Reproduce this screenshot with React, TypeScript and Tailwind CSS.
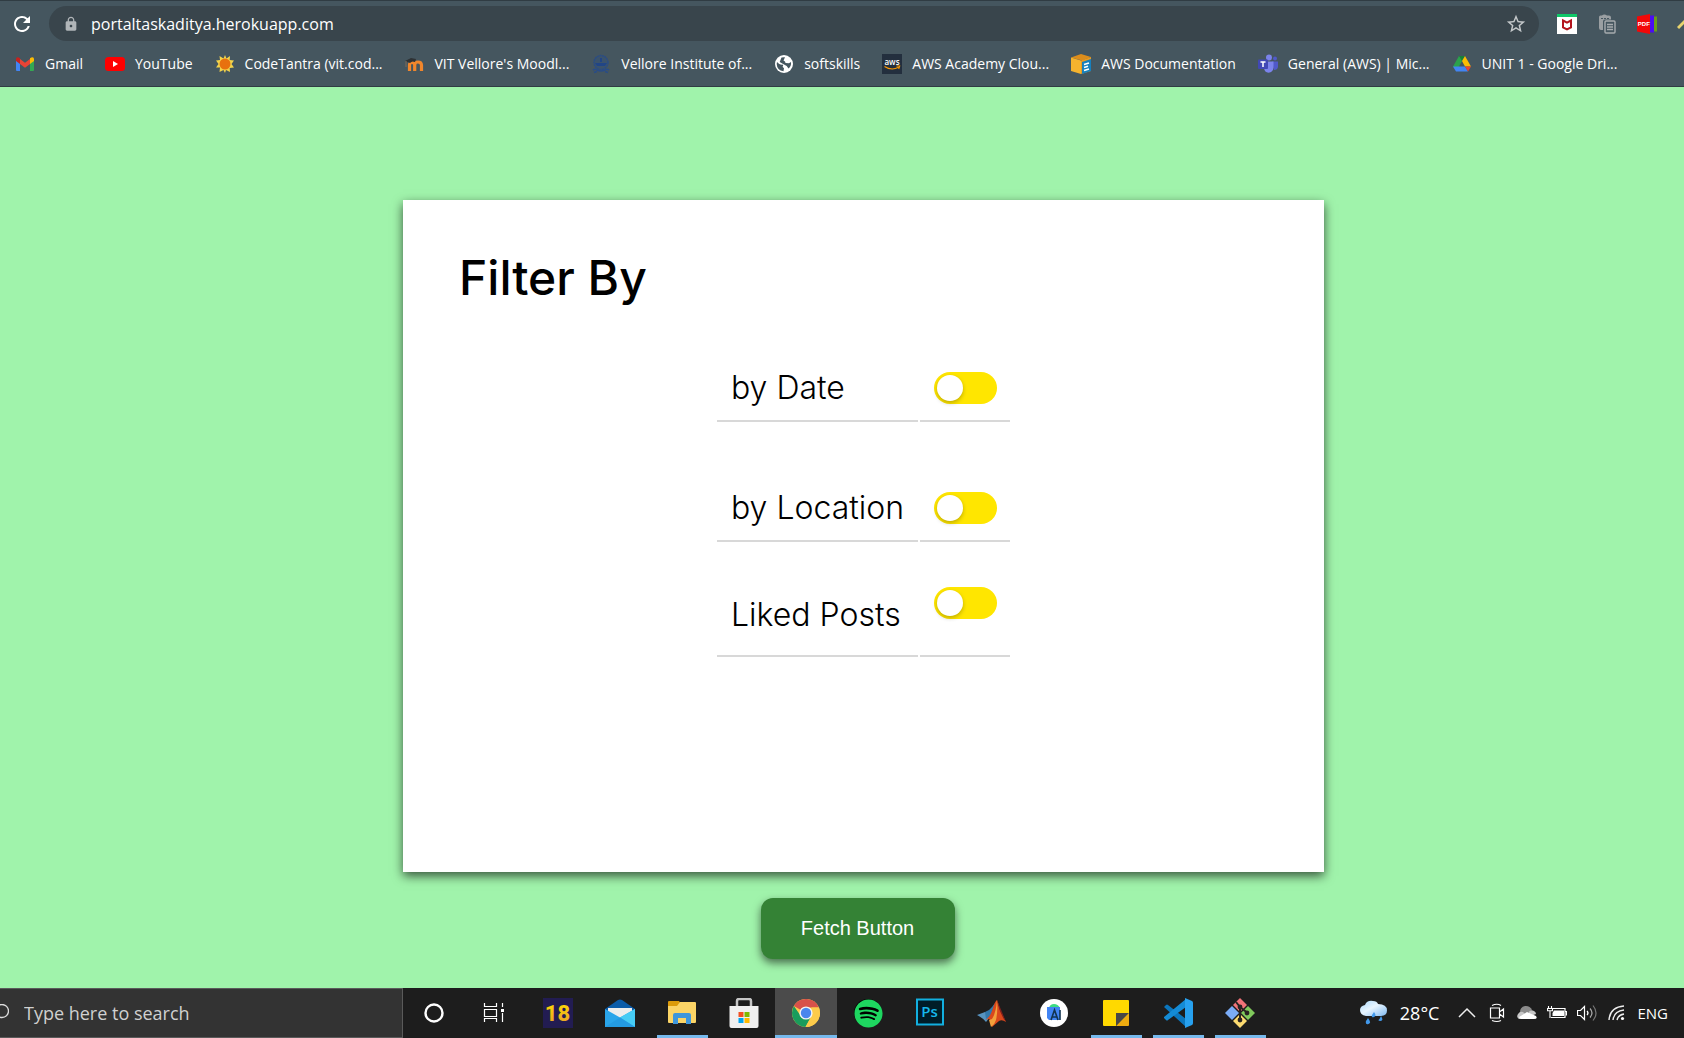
import type { ReactNode } from "react";
import { FaSpotify } from "react-icons/fa";
import { MdLock, MdRefresh, MdStarBorder } from "react-icons/md";

const Svg = ({ box = 20, className, children }: { box?: number; className: string; children: ReactNode }) => (
  <svg viewBox={`0 0 ${box} ${box}`} className={`shrink-0 ${className}`} aria-hidden="true">
    {children}
  </svg>
);

const S = "size-5";
const L = "size-[30px]";

const GmailIcon = () => (
  <Svg className={S}>
    <path d="M1 6v10q0 1 1 1h3V9z" fill="#4285f4" />
    <path d="M19 6v10q0 1-1 1h-3V9z" fill="#34a853" />
    <path d="M15 5.5V10l4-3V5q0-1.500-1.500-1.800-1-.1-2.500 1z" fill="#fbbc04" />
    <path d="M5 5.500V10L1 7V5q0-1.500 1.500-1.800 1-.1 2.500 1z" fill="#c5221f" />
    <path d="M5 5v5l5 3.800L15 10V5l-5 3.800z" fill="#ea4335" />
  </Svg>
);
const YouTubeIcon = () => (
  <Svg className={S}>
    <rect y="3" width="20" height="14" rx="3.500" fill="#f00" />
    <path d="M8 7v6l5-3z" fill="#fff" />
  </Svg>
);
const SunIcon = () => (
  <Svg className={S}>
    <path d="M10 1l1.500 3.500L15 2l-.3 4L19 6.500 16.500 10l2.500 3.500-4.300.5.300 4-4-2L10 19l-1.500-3-4 2 .5-4.500L1 13.500 3.500 10 1 6.500 5 6l-.5-4L8.500 4.500z" fill="#f3d34a" />
    <circle cx="10" cy="10" r="5.500" fill="#e8710f" />
  </Svg>
);
const MoodleIcon = () => (
  <Svg className={S}>
    <path d="M5.500 17v-6q0-2.500 2.500-2.500T10.700 11v6m0-6q0-3 3.300-3t3.500 3v6" fill="none" stroke="#f0862c" strokeWidth="3.200" />
    <path d="M1 7l6-3 5 1-1 3q-3-1.500-5 1z" fill="#2e3235" />
    <path d="M2 7v6" stroke="#806a58" strokeWidth="1" />
  </Svg>
);
const CrestIcon = () => (
  <Svg className={S}>
    <circle cx="10" cy="8.500" r="7" fill="#3b536c" stroke="#294c87" strokeWidth="1.400" strokeDasharray="2 .6" />
    <path d="M4 9h12l-2 3H6zM9 4h2v4H9z" fill="#214586" />
    <path d="M2 16q2-1.500 4 0 4 2 8 0 2-1.500 4 0M3 18.500l3-1m8 0l3 1" fill="none" stroke="#294c87" strokeWidth="1.600" />
  </Svg>
);
const GlobeIcon = () => (
  <Svg className={S}>
    <circle cx="10" cy="10" r="9" fill="#fff" />
    <path d="M3 8q2.500 3 5 2.600 2 .4.500 2.200l1.500 1.500-.500 3Q3 16.500 2.700 10zM7.500 3.500q2-.500 3.500-.3L9.500 6.500q2 .5 2 2.500l3.500.200 2-1.200q.5 4-2.500 6.600l-1.800-2.600-4-2.200-3-1.800z" fill="#45565f" />
  </Svg>
);
const AwsIcon = () => (
  <Svg className={S}>
    <rect width="20" height="20" fill="#232f3e" />
    <text x="10" y="10.500" textAnchor="middle" fontSize="8" fontWeight="600" fontFamily="Open Sans, sans-serif" fill="#fff">aws</text>
    <path d="M2.500 12.500q7 4.500 14 .8M14.500 12h3.200l-1 3" fill="none" stroke="#f90" strokeWidth="1.100" />
  </Svg>
);
const AwsDocIcon = () => (
  <Svg className={S}>
    <path d="M10 0l10 3-9 3.500L0 3.500z" fill="#dc8d1c" />
    <path d="M0 3.500l10 3V20L0 17z" fill="#f5b32e" />
    <path d="M10 6.500L20 3v14l-10 3z" fill="#e99b22" />
    <path d="M11 8l9-3v12l-9 3z" fill="#1680bd" />
    <path d="M13 10.500l5-1.500M13 13.500l4-1.200M13 16.500l5-1.500" stroke="#fff" strokeWidth="1.700" />
  </Svg>
);
const TeamsIcon = () => (
  <Svg className={S}>
    <circle cx="11" cy="3.500" r="3" fill="#7b83eb" />
    <circle cx="17" cy="4.500" r="2" fill="#5059c9" />
    <path d="M14 7.500h6v5.500q-.5 3-4 3z" fill="#5059c9" />
    <path d="M6 7.500h9.500v6q-.5 5-5 5.200Q6.500 18.500 6 14z" fill="#7b83eb" />
    <rect y="5.500" width="10" height="9.500" rx="1" fill="#4148b5" />
    <path d="M2.500 8h5M5 8v5" stroke="#fff" strokeWidth="1.500" />
  </Svg>
);
const DriveIcon = () => (
  <Svg className={S}>
    <path d="M7 2h3v5L4.500 17 1 12.500z" fill="#2ba24c" />
    <path d="M7 2h6l-3 5z" fill="#188038" />
    <path d="M13 2l6 10.500h-6L10 7z" fill="#fbbc04" />
    <path d="M7 12.500h6l3 5H4L1 12.500z" fill="#4285f4" />
    <path d="M13 12.500h6l-3 5z" fill="#ea4335" />
  </Svg>
);

const McAfeeIcon = () => (
  <Svg className={S}>
    <rect width="20" height="20" fill="#fff" />
    <rect width="20" height="3" fill="#0fc768" />
    <path d="M6 6.500l4 2.200 4-2.200v7L10 15.500l-4-2z" fill="none" stroke="#b3141d" strokeWidth="2" />
  </Svg>
);
const ClipboardIcon = () => (
  <Svg className={S}>
    <path d="M2 3q0-1.500 1.500-1.500H5q2-2 5 0h2q2 0 2 2v2H8q-2 0-2 2V16H4q-2 0-2-2z" fill="#9a9fa2" />
    <path d="M4 4.500h8" stroke="#45565f" strokeDasharray="2 1" />
    <rect x="8" y="7" width="10" height="12" rx="1" fill="#45565f" stroke="#a7acaf" strokeWidth="1.400" />
    <path d="M10 10.500h6M10 13h6M10 15.500h6" stroke="#a7acaf" strokeWidth="1.300" />
  </Svg>
);
const PdfIcon = () => (
  <Svg className={S}>
    <path d="M16 2.500h4v15h-4z" fill="#6b9a19" />
    <path d="M13 1.500h4v17h-4z" fill="#4b0df2" />
    <path d="M0 2.500L13 0v20L0 17.500z" fill="#f20808" />
    <text x="6.800" y="12.200" textAnchor="middle" fontSize="6" fontWeight="700" fontFamily="Liberation Sans, sans-serif" fill="#fff">PDF</text>
  </Svg>
);

const CortanaIcon = () => (
  <Svg box={30} className={L}><circle cx="15" cy="15" r="8.500" fill="none" stroke="#fff" strokeWidth="2.400" /></Svg>
);
const TaskViewIcon = () => (
  <Svg box={30} className={L}>
    <path d="M3.500 5v3.500h12V5M3.500 24v-3.500h12V24M3.500 11.500h12v7h-12zM21.500 5v4m0 6v9" fill="none" stroke="#fff" strokeWidth="1.200" />
    <rect x="20" y="11" width="3" height="3" fill="#fff" />
  </Svg>
);
const EighteenIcon = () => (
  <Svg box={30} className={L}>
    <defs><linearGradient id="gold" x2="0" y2="1"><stop stopColor="#ffe000" /><stop offset="1" stopColor="#e79a2c" /></linearGradient></defs>
    <rect width="30" height="30" fill="#221c52" />
    <text x="14.500" y="23" textAnchor="middle" fontSize="22" fontWeight="800" fontFamily="Roboto, sans-serif" fill="url(#gold)">18</text>
  </Svg>
);
const MailIcon = () => (
  <Svg box={30} className={L}>
    <path d="M0 11L13 2q2-1 4 0l13 9v8H0z" fill="#0a5ba8" />
    <path d="M3 10h24v7l-12 5L3 17z" fill="#ededed" />
    <path d="M0 11l15 8.500L30 11v18H0z" fill="#2aa5ea" />
    <path d="M30 11v18L15 19.500z" fill="#46ccf5" />
    <path d="M0 29h30L15 19.500z" fill="#249be2" />
  </Svg>
);
const FolderIcon = () => (
  <Svg box={30} className={L}>
    <path d="M1 4q0-1 1-1h10l2 3v5H1z" fill="#dc9b0a" />
    <path d="M1 8h9l3-4h15q1 0 1 1v19q0 1-1 1H2q-1 0-1-1z" fill="#fbd466" />
    <path d="M6 26V17q0-2 2-2h14q2 0 2 2v9h-5v-6h-8v6z" fill="#3e96dc" />
  </Svg>
);
const StoreIcon = () => (
  <Svg box={30} className={L}>
    <path d="M8 9V3q0-2 2-2h10q2 0 2 2v6" fill="none" stroke="#c6c6c6" strokeWidth="2.500" />
    <path d="M.500 8h29v20q0 2-2 2h-25q-2 0-2-2z" fill="#f0f0f0" />
    <path d="M9.500 14h5v5h-5z" fill="#f25022" /><path d="M15.500 14h5v5h-5z" fill="#7fba00" />
    <path d="M9.500 20h5v5h-5z" fill="#00a4ef" /><path d="M15.500 20h5v5h-5z" fill="#ffb900" />
  </Svg>
);
const ChromeIcon = () => (
  <Svg box={30} className={L}>
    <circle cx="15" cy="15" r="14" fill="#fdcb4b" />
    <path d="M15 15L2.900 8A14 14 0 0 1 27.800 9.500H15z" fill="#d8514a" />
    <path d="M2.900 8A14 14 0 0 0 14.500 29L20.500 18 9.800 18z" fill="#1a9c5c" />
    <path d="M27.800 9.500A14 14 0 0 1 14.500 29L20.500 18V9.500z" fill="#fdcb4b" />
    <circle cx="15" cy="15" r="6.600" fill="#f4f4f4" />
    <circle cx="15" cy="15" r="5.200" fill="#4a86ee" />
  </Svg>
);
const SpotifyIcon = () => (
  <span className="grid size-[30px] place-items-center">
    <span className="grid size-7 place-items-center rounded-full bg-black"><FaSpotify className="size-[29px] shrink-0 text-[#1ed760]" /></span>
  </span>
);
const PsIcon = () => (
  <Svg box={30} className={L}>
    <rect x="2" y="1.500" width="26" height="25" fill="#001d28" stroke="#12b0e0" strokeWidth="2" />
    <text x="14.500" y="19" textAnchor="middle" fontSize="15" fontWeight="600" fontFamily="Open Sans, sans-serif" fill="#16b8ec">Ps</text>
  </Svg>
);
const MatlabIcon = () => (
  <Svg box={30} className={L}>
    <path d="M0 17l8-3 5 5-4 5q-3-4-9-7z" fill="#5793c0" />
    <path d="M8 14q4-1 7-5l3-4-4 13-5 3z" fill="#3478ab" />
    <path d="M8 22q5-2 8-12 2-7 4-8 2 5 3 10l6 12q-4-3-7-1l-7 6q0-6-3-8z" fill="#d9481c" />
    <path d="M20 2q-1 13-5 19l-3 1 2 7q4-3 5-7 2-9 1-20z" fill="#f2a13b" />
    <path d="M20 2q5 12 9 22-5-6-8-17z" fill="#83201c" />
  </Svg>
);
const AndroidStudioIcon = () => (
  <Svg box={30} className={L}>
    <circle cx="15" cy="15" r="14" fill="#fff" />
    <path d="M10 10q1-4 5-4t6 4z" fill="#3ddc84" />
    <path d="M8 9h13v13H10l-2-2z" fill="#4285f4" />
    <path d="M12 22l3.500-10L19 22M13.500 19h4M21 12v10" fill="none" stroke="#123450" strokeWidth="1.600" />
  </Svg>
);
const StickyIcon = () => (
  <Svg box={30} className={L}>
    <path d="M2 3q0-1 1-1h24q1 0 1 1v13L15 28H3q-1 0-1-1z" fill="#ffd900" />
    <path d="M28 15v12q0 1-1 1H15z" fill="#eeac10" />
    <path d="M15 15h13L15 28z" fill="#474747" />
  </Svg>
);
const VsCodeIcon = () => (
  <Svg box={30} className={L}>
    <path d="M1 9l2-2q1-1 2 0l18 14v8z" fill="#0b76bd" />
    <path d="M1 20l2 2q1 1 2 0L23 9V1L1 19z" fill="#148bd5" />
    <path d="M22 0l7 3q1 .5 1 2v20q0 1.500-1 2l-7 3z" fill="#27a1ef" />
  </Svg>
);
const GitIcon = () => (
  <Svg box={30} className={L}>
    <path d="M15 0l7 7-7 7-7-7z" fill="#f17378" />
    <path d="M7 8l7 7-7 7-7-7z" fill="#7bacf7" />
    <path d="M23 8l7 7-7 7-7-7z" fill="#80c95c" />
    <path d="M15 16l7 7-7 7-7-7z" fill="#fcda70" />
    <path d="M11 4l4 5v14M15 9l7 5.500" fill="none" stroke="#282322" strokeWidth="2" />
    <circle cx="15" cy="9" r="2.400" fill="#282322" /><circle cx="22" cy="15" r="2.400" fill="#282322" /><circle cx="15" cy="22" r="2.400" fill="#282322" />
  </Svg>
);

const RainIcon = () => (
  <Svg box={28} className="size-7">
    <defs><linearGradient id="cloud" x1="0" y1="0" x2="1" y2="1"><stop stopColor="#a9d8fb" /><stop offset=".45" stopColor="#e8f5ff" /><stop offset="1" stopColor="#7fb9f0" /></linearGradient></defs>
    <path d="M6 17q-6-1-6-6 0-4 5-5 2-5 8-4 4 0 5 3 9 0 9 6.500 0 5-6 5.500z" fill="url(#cloud)" />
    <path d="M14 13q3 4 0 5t-2-2zM21 17q3 5-.500 5t-1-2zM8 19q4 5 .500 6t-2.500-3z" fill="#4299eb" />
  </Svg>
);
const ChevronIcon = () => <Svg className={S}><path d="M2 14l8-8 8 8" fill="none" stroke="#eee" strokeWidth="1.500" /></Svg>;
const CameraIcon = () => (
  <Svg className={S}>
    <path d="M3.500 5h9v10h-9zM12.500 9l4-3v8l-4-3M5 2.500q5-2.500 9 0M5 17.500q5 2 9 0" fill="none" stroke="#fff" strokeWidth="1.200" />
  </Svg>
);
const CloudIcon = () => (
  <Svg className={S}>
    <path d="M3 12q-1-8 5-9 5-.500 7 4l-9 6z" fill="#8b8b8b" />
    <path d="M2 16q-3-2-1-5 2-3 5-2l8 7zM11 10q2-4 6-2 2 1 2 3l-5 2z" fill="#c7c7c7" />
    <path d="M4 16q-2-1-2-2l8-5 9 4q2 3-2 3z" fill="#fff" />
  </Svg>
);
const BatteryIcon = () => (
  <Svg className={S}>
    <path d="M5 5.500h13v9H4M18.500 8.500h1v4" fill="none" stroke="#fff" strokeWidth="1.200" />
    <path d="M7 7.500h10v5.500H5.500V10z" fill="#fff" />
    <path d="M1.500 3v2m3-2v2M.500 5.500h5v2.300H.500zM3 8v7" fill="none" stroke="#fff" strokeWidth="1.100" />
  </Svg>
);
const SpeakerIcon = () => (
  <Svg className={S}>
    <path d="M.500 7.500h3l4-4v13l-4-4h-3z" fill="none" stroke="#fff" strokeWidth="1.200" />
    <path d="M10 8q2 2 0 4" fill="none" stroke="#fff" strokeWidth="1.200" />
    <path d="M13 5.500q4 4.500 0 9" fill="none" stroke="#aaa" strokeWidth="1.200" />
    <path d="M16 2.500q6 7.500 0 15" fill="none" stroke="#777" strokeWidth="1.200" />
  </Svg>
);
const WifiIcon = () => (
  <Svg className={S}>
    <path d="M2 17Q3 4 17 3M6 17Q7 8 17 7M10 17q1-5 7-6" fill="none" stroke="#eee" strokeWidth="1.400" />
    <circle cx="15.500" cy="15.500" r="1.600" fill="#fff" />
  </Svg>
);

const bookmarks = [
  { label: "Gmail", icon: <GmailIcon /> },
  { label: "YouTube", icon: <YouTubeIcon /> },
  { label: "CodeTantra (vit.cod...", icon: <SunIcon /> },
  { label: "VIT Vellore's Moodl...", icon: <MoodleIcon /> },
  { label: "Vellore Institute of...", icon: <CrestIcon /> },
  { label: "softskills", icon: <GlobeIcon /> },
  { label: "AWS Academy Clou...", icon: <AwsIcon /> },
  { label: "AWS Documentation", icon: <AwsDocIcon /> },
  { label: "General (AWS) | Mic...", icon: <TeamsIcon /> },
  { label: "UNIT 1 - Google Dri...", icon: <DriveIcon /> },
];

const filters = [
  { id: "date", label: "by Date", labelCell: "pb-4", toggleCell: "pb-4", row: "h-[118px]" },
  { id: "location", label: "by Location", labelCell: "pb-4", toggleCell: "pb-4", row: "h-[118px]" },
  { id: "liked", label: "Liked Posts", labelCell: "pb-6", toggleCell: "pb-9", row: "h-[113px]" },
];

const apps = [
  { name: "Cortana", icon: <CortanaIcon /> },
  { name: "Task View", icon: <TaskViewIcon /> },
  { name: "Sony 18", icon: <EighteenIcon /> },
  { name: "Mail", icon: <MailIcon /> },
  { name: "File Explorer", icon: <FolderIcon />, state: "open" },
  { name: "Microsoft Store", icon: <StoreIcon /> },
  { name: "Google Chrome", icon: <ChromeIcon />, state: "active" },
  { name: "Spotify", icon: <SpotifyIcon /> },
  { name: "Photoshop", icon: <PsIcon /> },
  { name: "MATLAB", icon: <MatlabIcon /> },
  { name: "Android Studio", icon: <AndroidStudioIcon /> },
  { name: "Sticky Notes", icon: <StickyIcon />, state: "open" },
  { name: "VS Code", icon: <VsCodeIcon />, state: "open" },
  { name: "Git", icon: <GitIcon />, state: "open" },
];

function BrowserBar() {
  return (
    <header className="overflow-hidden border-y border-[#303c43] bg-[#45565f] text-white">
      <div className="flex h-[45px] items-center">
        <button aria-label="Reload" className="grid w-[49px] shrink-0 place-items-center pr-1.5">
          <MdRefresh className="size-6" />
        </button>
        <div className="flex h-[35px] min-w-0 flex-1 items-center rounded-full bg-[#39454c] pr-3 pl-3.5">
          <MdLock className="size-4 shrink-0 text-[#b0b5b8]" />
          <input
            aria-label="Address"
            defaultValue="portaltaskaditya.herokuapp.com"
            className="ml-3 min-w-0 flex-1 bg-transparent font-['Open_Sans',sans-serif] text-base outline-none"
          />
          <button aria-label="Bookmark this page"><MdStarBorder className="size-[22px] text-[#c4c8ca]" /></button>
        </div>
        <div className="flex w-[145px] shrink-0 items-center gap-5 pl-[18px]">
          <button aria-label="McAfee"><McAfeeIcon /></button>
          <button aria-label="Clipboard"><ClipboardIcon /></button>
          <button aria-label="PDF tools"><PdfIcon /></button>
          <button aria-label="Edit"><Svg className={S}><path d="M1 14L12 3" stroke="#e8d36e" strokeWidth="3" /></Svg></button>
        </div>
      </div>
      <nav aria-label="Bookmarks" className="flex h-10 items-center gap-[22px] pb-1 pl-[15px]">
        {bookmarks.map((b) => (
          <a key={b.label} href="#" className="flex shrink-0 items-center gap-2.5 font-['Open_Sans',sans-serif] text-sm whitespace-nowrap">
            {b.icon}
            {b.label}
          </a>
        ))}
      </nav>
    </header>
  );
}

function FilterCard() {
  return (
    <section className="min-h-[672px] w-full max-w-[921px] bg-white pt-[54px] font-[Inter,sans-serif] text-black shadow-[0_4px_10px_rgba(0,0,0,0.65)]">
      <h1 className="pl-14 text-5xl leading-[48px] font-medium">Filter By</h1>
      <table className="mx-auto border-separate border-spacing-[2px]">
        <tbody>
          {filters.map((f) => (
            <tr key={f.id} className={f.row}>
              <td className={`w-[201px] border-b-2 border-[#d8d8d8] px-3.5 align-bottom ${f.labelCell}`}>
                <label htmlFor={f.id} className="block text-[32px] leading-8 font-light whitespace-nowrap">{f.label}</label>
              </td>
              <td className={`border-b-2 border-[#d8d8d8] pr-[13px] pl-3.5 align-bottom ${f.toggleCell}`}>
                <input
                  id={f.id}
                  type="checkbox"
                  className="flex h-8 w-[63px] appearance-none items-center rounded-full bg-[#ffe600] px-[3px] before:size-[26px] before:rounded-full before:bg-white before:shadow-[0_2px_4px_rgba(0,0,0,0.25)] checked:justify-end"
                />
              </td>
            </tr>
          ))}
        </tbody>
      </table>
    </section>
  );
}

function Taskbar() {
  return (
    <footer className="flex h-[50px] items-stretch overflow-hidden bg-[#1d1d1d] text-white">
      <div className="flex w-[403px] shrink-0 items-center border border-l-0 border-[#5a5a5a] bg-[#333]">
        <svg viewBox="0 0 9 18" className="h-[18px] w-[9px] shrink-0" aria-hidden="true">
          <circle cx="2" cy="7" r="6.500" fill="none" stroke="#ddd" strokeWidth="1.300" />
        </svg>
        <input
          aria-label="Search"
          placeholder="Type here to search"
          className="ml-[15px] min-w-0 flex-1 bg-transparent font-['Open_Sans',sans-serif] text-lg outline-none placeholder:text-[#d0d0d0]"
        />
      </div>
      {apps.map((a) => (
        <button
          key={a.name}
          aria-label={a.name}
          className={`flex w-[62px] shrink-0 flex-col items-center ${a.state === "active" ? "bg-[#4b4b4b]" : ""}`}
        >
          <span className="grid flex-1 place-items-center pt-[3px]">{a.icon}</span>
          <span className={`h-[3px] ${a.state === "active" ? "w-full bg-[#76b9ed]" : a.state === "open" ? "w-[51px] bg-[#76b9ed]" : ""}`} />
        </button>
      ))}
      <div className="ml-auto flex items-center gap-2.5 pr-4 font-['Open_Sans',sans-serif]">
        <button className="mr-2 flex items-center gap-3 text-lg"><RainIcon />28°C</button>
        <button aria-label="Show hidden icons"><ChevronIcon /></button>
        <button aria-label="Meet now"><CameraIcon /></button>
        <button aria-label="OneDrive"><CloudIcon /></button>
        <button aria-label="Battery"><BatteryIcon /></button>
        <button aria-label="Volume"><SpeakerIcon /></button>
        <button aria-label="Network"><WifiIcon /></button>
        <button className="text-[15px]">ENG</button>
      </div>
    </footer>
  );
}

export default function App() {
  return (
    <div className="flex min-h-screen flex-col overflow-hidden bg-[#a0f3ab]">
      <BrowserBar />
      <main className="flex flex-1 flex-col items-center pt-[113px] pb-7 pl-[43px]">
        <FilterCard />
        <button className="mt-[26px] mr-3 h-[61px] w-[194px] rounded-xl bg-[#348235] pb-0.5 font-['Liberation_Sans',sans-serif] text-xl text-white shadow-[0_4px_8px_rgba(0,0,0,0.55)]">
          Fetch Button
        </button>
      </main>
      <Taskbar />
    </div>
  );
}
